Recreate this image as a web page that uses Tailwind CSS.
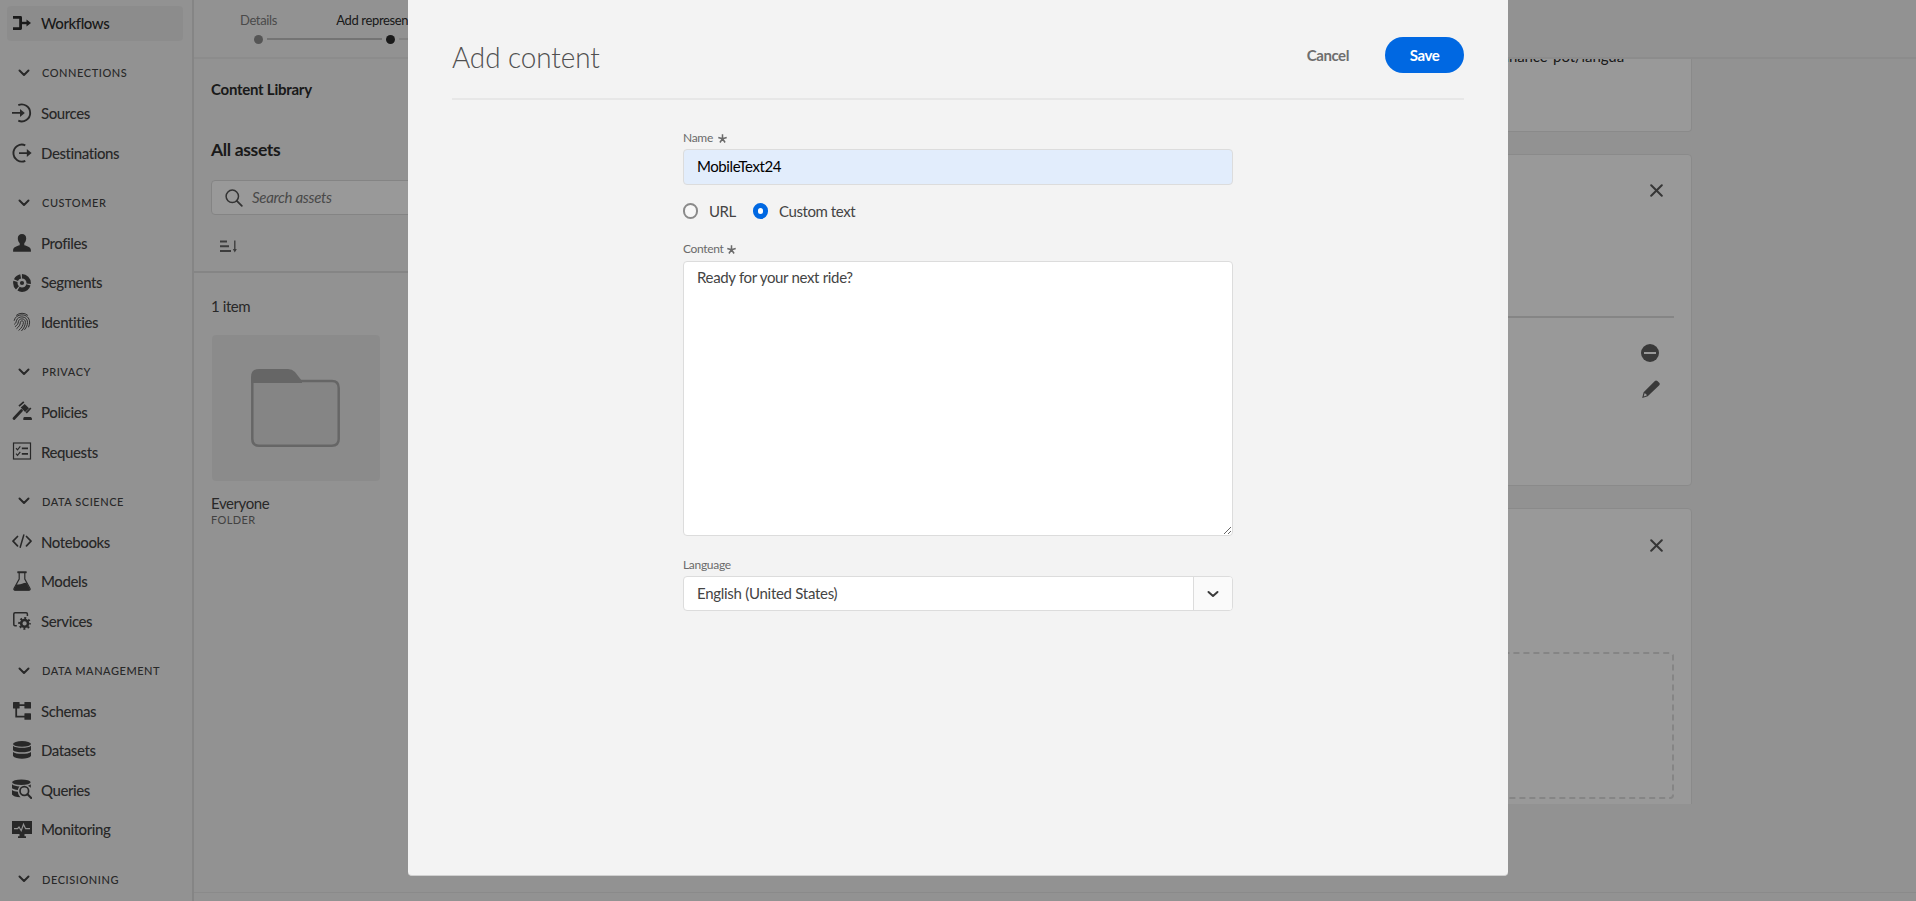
<!DOCTYPE html>
<html lang="en">
<head>
<meta charset="utf-8">
<title>Add content</title>
<script src="https://cdn.jsdelivr.net/npm/@tailwindcss/browser@4"></script>
</head>
<body class="h-[901px] overflow-hidden bg-[#f4f4f4] font-['Lato',sans-serif] text-[15px] tracking-[-0.42px] text-[#444]">
<div class="relative flex h-[901px] overflow-hidden">

  <!-- Side navigation -->
  <aside class="w-[194px] flex-none overflow-hidden border-r-2 border-[#dedede] font-medium">
    <div class="ml-[7px] mt-[6px] mb-[2px] flex h-[35px] w-[176px] items-center gap-[9px] rounded bg-[#eaeaea] pl-[5px] text-[#2c2c2c]">
      <svg class="-mt-0.5 size-5" viewBox="0 0 20 20" fill="none" stroke="currentColor"><path d="M1 4.400H8.600V15.600H1" stroke-width="2.800" stroke-linejoin="round"/><path d="M8 10H16" stroke-width="2.400"/><path d="M14.500 6.400L19 10L14.500 13.600Z" fill="currentColor" stroke="none"/></svg>
      <span>Workflows</span>
    </div>

    <div class="flex h-[50.7px] items-center gap-[12px] pl-[18px] pt-[10px] text-[11px] tracking-[0.55px]">
      <svg class="-mt-px h-3 w-3" viewBox="0 0 12 12" fill="none" stroke="currentColor" stroke-width="2" stroke-linecap="round" stroke-linejoin="round"><path d="M1.500 3.500L6 8L10.500 3.500"/></svg>
      <span>CONNECTIONS</span>
    </div>
    <div class="flex h-[39.5px] items-center gap-[9px] pl-3">
      <svg class="size-5" viewBox="0 0 20 20" fill="none" stroke="currentColor" stroke-width="1.9"><path d="M6.300 2.100A8.500 8.500 0 1 1 6.300 17.700M0 9.900H9"/><path d="M8 5.900L12.800 9.900L8 13.900Z" fill="currentColor" stroke="none"/></svg>
      <span>Sources</span>
    </div>
    <div class="flex h-[39.5px] items-center gap-[9px] pl-3">
      <svg class="size-5" viewBox="0 0 20 20" fill="none" stroke="currentColor" stroke-width="1.9"><path d="M13.300 2.300A8.500 8.500 0 1 0 13.300 17.900M7 10.100H16"/><path d="M14.800 6.100L19.600 10.100L14.800 14.100Z" fill="currentColor" stroke="none"/></svg>
      <span>Destinations</span>
    </div>

    <div class="flex h-[50.7px] items-center gap-[12px] pl-[18px] pt-[10px] text-[11px] tracking-[0.55px]">
      <svg class="-mt-px h-3 w-3" viewBox="0 0 12 12" fill="none" stroke="currentColor" stroke-width="2" stroke-linecap="round" stroke-linejoin="round"><path d="M1.500 3.500L6 8L10.500 3.500"/></svg>
      <span>CUSTOMER</span>
    </div>
    <div class="flex h-[39.5px] items-center gap-[9px] pl-3">
      <svg class="size-5" viewBox="0 0 20 20" fill="currentColor"><path d="M10 1C12.600 1 14.200 2.700 14.200 5.300C14.200 7.500 13.400 9.200 12.300 10.300V12.200C15.500 13 18.900 14.300 18.900 17.200V18.700H1.100V17.200C1.100 14.300 4.500 13 7.700 12.200V10.300C6.600 9.200 5.800 7.500 5.800 5.300C5.800 2.700 7.400 1 10 1Z"/></svg>
      <span>Profiles</span>
    </div>
    <div class="flex h-[39.5px] items-center gap-[9px] pl-3">
      <svg class="size-5" viewBox="0 0 20 20" fill="none" stroke="currentColor"><circle cx="10" cy="10" r="6.700" stroke-width="4.400" stroke-dasharray="12.100 1.300 7.200 1.300 6.100 1.300 11.500 1.300" stroke-dashoffset="-2"/><circle cx="10" cy="10" r="2.100" fill="currentColor" stroke="none"/></svg>
      <span>Segments</span>
    </div>
    <div class="flex h-[39.5px] items-center gap-[9px] pl-3">
      <svg class="size-5" viewBox="0 0 20 20" fill="none" stroke="currentColor" stroke-width=".95" stroke-linecap="round"><path d="M4.500 3.200A8.500 8.500 0 0 1 15.600 3.200M2.200 8.400C3 4.900 6 2.900 9.800 2.900C14.300 2.900 17.500 5.800 17.600 10.100C17.600 12 17.200 13.500 16.600 14.900M2.500 12.200C4.600 10.800 4 9.500 4.600 8.200C5.500 6 7.300 4.900 9.900 4.900C13.300 4.900 15.500 7 15.500 10.300C15.500 13.200 14.300 15.400 12.700 17.500M3.300 14.500C5.500 13.100 6.200 11.500 6.400 9.700C6.600 7.900 8 6.900 9.900 6.900C12 6.900 13.500 8.200 13.400 10.400C13.200 13.600 11.800 16.400 9.700 18.700M4.800 16.500C7.100 14.700 8.200 12.700 8.400 10.300C8.500 9.300 9.100 8.900 9.900 8.900C10.900 8.900 11.500 9.500 11.400 10.500C11.200 13.400 9.500 16.200 6.900 18.200"/></svg>
      <span>Identities</span>
    </div>

    <div class="flex h-[50.7px] items-center gap-[12px] pl-[18px] pt-[10px] text-[11px] tracking-[0.55px]">
      <svg class="-mt-px h-3 w-3" viewBox="0 0 12 12" fill="none" stroke="currentColor" stroke-width="2" stroke-linecap="round" stroke-linejoin="round"><path d="M1.500 3.500L6 8L10.500 3.500"/></svg>
      <span>PRIVACY</span>
    </div>
    <div class="flex h-[39.5px] items-center gap-[9px] pl-3">
      <svg class="-mt-0.5 size-5" viewBox="0 0 20 20" fill="currentColor"><path d="M9.500 9.500L2 17.500" stroke="currentColor" stroke-width="2.800" stroke-linecap="round"/><path d="M7 5.200L11.800 .900M14.200 11.900L18.800 7" stroke="currentColor" stroke-width="1.800"/><path d="M8.700 6.500L12.700 2.900L17 7.300L13.100 10.900Z"/><path d="M11.300 19V17.500C11.300 16.300 12.300 15.900 13 15.900H18C19 15.900 19.900 16.500 19.900 17.600V19Z"/></svg>
      <span>Policies</span>
    </div>
    <div class="flex h-[39.5px] items-center gap-[9px] pl-3">
      <svg class="-mt-px size-5" viewBox="0 0 20 20" fill="none" stroke="currentColor"><rect x="1.500" y="2" width="17" height="16" stroke-width="1.200"/><path d="M9.800 7.300H16M9.800 12.800H16" stroke-width="1.700"/><path d="M4 7.200L5.500 8.800L8.300 5.400M4 12.700L5.500 14.300L8.300 10.900" stroke-width="1.200"/></svg>
      <span>Requests</span>
    </div>

    <div class="flex h-[50.7px] items-center gap-[12px] pl-[18px] pt-[10px] text-[11px] tracking-[0.55px]">
      <svg class="-mt-px h-3 w-3" viewBox="0 0 12 12" fill="none" stroke="currentColor" stroke-width="2" stroke-linecap="round" stroke-linejoin="round"><path d="M1.500 3.500L6 8L10.500 3.500"/></svg>
      <span>DATA SCIENCE</span>
    </div>
    <div class="flex h-[39.5px] items-center gap-[9px] pl-3">
      <svg class="-mt-0.5 size-5" viewBox="0 0 20 20" fill="none" stroke="currentColor" stroke-width="1.700" stroke-linecap="round" stroke-linejoin="round"><path d="M5.500 5.500L1 10.200L5.500 14.900M14.500 5.500L19 10.200L14.500 14.900"/><path d="M11.800 4L8.200 16.200" stroke-width="1.500"/></svg>
      <span>Notebooks</span>
    </div>
    <div class="flex h-[39.5px] items-center gap-[9px] pl-3">
      <svg class="-mt-0.5 size-5" viewBox="0 0 20 20" fill="currentColor"><rect x="5.300" y=".300" width="9.400" height="1.900" rx=".4"/><path d="M7.200 2V8L2 17.500C1.600 18.500 2 19.200 3 19.200H17C18 19.200 18.400 18.500 18 17.500L12.800 8V2" fill="none" stroke="currentColor" stroke-width="1.200"/><path d="M4.600 13.200C8 14.300 10.800 11.500 14.400 11.700L18 18.200L17.300 19.500H2.600L1.900 18.200Z"/></svg>
      <span>Models</span>
    </div>
    <div class="flex h-[39.5px] items-center gap-[9px] pl-3">
      <svg class="size-5" viewBox="0 0 20 20" fill="none" stroke="currentColor"><path d="M4.800 14.700H3C2.200 14.700 1.800 14.200 1.800 13.500V2.900C1.800 2.100 2.300 1.700 3 1.700H14.200C15 1.700 15.400 2.100 15.400 2.900V5" stroke-width="1.500"/><circle cx="12.600" cy="12.400" r="3.400" stroke-width="2.600"/><circle cx="12.600" cy="12.400" r="5.400" stroke-width="2" stroke-dasharray="2 2.241" stroke-dashoffset="1"/></svg>
      <span>Services</span>
    </div>

    <div class="flex h-[50.7px] items-center gap-[12px] pl-[18px] pt-[10px] text-[11px] tracking-[0.55px]">
      <svg class="-mt-px h-3 w-3" viewBox="0 0 12 12" fill="none" stroke="currentColor" stroke-width="2" stroke-linecap="round" stroke-linejoin="round"><path d="M1.500 3.500L6 8L10.500 3.500"/></svg>
      <span>DATA MANAGEMENT</span>
    </div>
    <div class="flex h-[39.5px] items-center gap-[9px] pl-3">
      <svg class="size-5" viewBox="0 0 20 20" fill="currentColor"><rect x="1" y="1" width="6.600" height="6.600" rx=".6"/><rect x="12.400" y="1" width="6.600" height="6.600" rx=".6"/><rect x="12.400" y="12.200" width="6.600" height="6.600" rx=".6"/><path d="M7 4.200H13M4.200 7V15.600H13" fill="none" stroke="currentColor" stroke-width="1.800"/></svg>
      <span>Schemas</span>
    </div>
    <div class="flex h-[39.5px] items-center gap-[9px] pl-3">
      <svg class="-mt-0.5 size-5" viewBox="0 0 20 20" fill="currentColor"><ellipse cx="10" cy="3.900" rx="9" ry="2.800"/><path d="M1 5.700C3.500 8.500 16.500 8.500 19 5.700V10.200C16.500 13 3.500 13 1 10.200ZM1 11.900C3.500 14.500 16.500 14.500 19 11.900V16C16.500 19.500 3.500 19.500 1 16Z"/></svg>
      <span>Datasets</span>
    </div>
    <div class="flex h-[39.5px] items-center gap-[9px] pl-3">
      <svg class="-mt-0.5 size-5" viewBox="0 0 20 20" fill="currentColor"><ellipse cx="9.400" cy="3.300" rx="9.300" ry="2.800"/><path d="M0 5.200C1.600 6.600 4.500 7.200 7.600 7.400C6.600 8.300 6 9.700 5.900 11C3 10.700 1 10 0 9.200ZM0 11C1.500 12 3.500 12.500 5.900 12.700C6 14.800 6.900 16.700 8.600 18.200C4.500 18.300 .9 17.200 0 15.500ZM15.700 6.700C17.200 6.300 18.300 5.800 18.800 5.200V9C18.200 8 17 7.100 15.700 6.700Z"/><circle cx="12.300" cy="12" r="4.300" fill="none" stroke="currentColor" stroke-width="1.700"/><path d="M15.500 15.200L19.200 18.900" stroke="currentColor" stroke-width="2.100" stroke-linecap="round"/></svg>
      <span>Queries</span>
    </div>
    <div class="flex h-[39.5px] items-center gap-[9px] pl-3">
      <svg class="-mt-0.5 size-5" viewBox="0 0 20 20" fill="currentColor"><path d="M0 2H20V15H12.500V17.200H14V19H6V17.200H7.500V15H0Z"/><path d="M2 9.700H5.500L7 8L9.200 11.700L11.500 5.400L13.600 9.700H18" fill="none" stroke="#f4f4f4" stroke-width="1.200"/></svg>
      <span>Monitoring</span>
    </div>

    <div class="flex h-[50.7px] items-center gap-[12px] pl-[18px] pt-[10px] text-[11px] tracking-[0.55px]">
      <svg class="-mt-px h-3 w-3" viewBox="0 0 12 12" fill="none" stroke="currentColor" stroke-width="2" stroke-linecap="round" stroke-linejoin="round"><path d="M1.500 3.500L6 8L10.500 3.500"/></svg>
      <span>DECISIONING</span>
    </div>
  </aside>

  <!-- Page behind the dialog -->
  <main class="flex min-w-0 flex-1 flex-col">
    <header class="flex h-[59px] flex-none border-b-2 border-[#eaeaea] pl-[24px] pt-[11px] text-[13px] tracking-[-0.35px]">
      <ol class="flex">
        <li class="flex w-[81px] flex-col items-center">
          <span class="h-[24px] leading-[18px] text-[#7c7c7c]">Details</span>
          <span class="size-[9px] rounded-full bg-[#8e8e8e]"></span>
        </li>
        <li class="-mx-8 mt-[27px] h-0.5 w-[115px] bg-[#c2c2c2]"></li>
        <li class="flex w-[81px] flex-col items-center">
          <span class="h-[24px] whitespace-nowrap leading-[18px] text-[#2c2c2c]">Add representations</span>
          <span class="size-[9px] rounded-full bg-[#2c2c2c]"></span>
        </li>
        <li class="-mx-8 mt-[27px] h-0.5 w-[115px] bg-[#dcdcdc]"></li>
      </ol>
    </header>

    <div class="flex h-[833px] flex-none">
      <section class="w-[400px] flex-none">
        <div class="h-[214px] border-b-2 border-[#dedede] pl-[17px]">
          <h2 class="pt-[19px] text-[15px] leading-[22px] font-bold tracking-[-0.25px] text-[#2c2c2c]">Content Library</h2>
          <h1 class="mt-[38px] text-[17.5px] leading-[24px] font-bold tracking-[-0.35px] text-[#2c2c2c]">All assets</h1>
          <div class="mt-[18px] flex h-[35px] items-center gap-[9px] rounded border border-[#dcdcdc] bg-white pl-[13px] italic tracking-[-0.3px] text-[#7a7a7a]">
            <svg class="size-[18px]" viewBox="0 0 18 18" fill="none" stroke="#555" stroke-width="1.500" stroke-linecap="round"><circle cx="7.300" cy="7.300" r="6.200"/><path d="M11.800 11.800L16.800 16.800" stroke-width="1.800"/></svg>
            <span>Search assets</span>
          </div>
          <svg class="mt-[25px] ml-[9px] h-[13px] w-[18px]" viewBox="0 0 18 13" fill="none" stroke="#666" stroke-width="2"><path d="M0 1.500H7M0 6.300H9M0 11.100H11"/><path d="M14.800 .500V11" stroke-width="1.400"/><path d="M12.800 9H16.800L14.800 12.500Z" fill="#666" stroke="none"/></svg>
        </div>
        <div class="pl-[17px]">
          <p class="mt-[22px] h-[22px] leading-[22px]">1 item</p>
          <div class="mt-[18px] ml-[1px] flex h-[146px] w-[168px] items-center justify-center rounded bg-[#e8e8e8]">
            <svg class="h-[78px] w-[89px] -ml-0.5" viewBox="0 0 89 78"><path d="M1.300 14V70Q1.300 76.700 8 76.700H81Q87.700 76.700 87.700 70V19Q87.700 12 81 12H1.300Z" fill="#dedede" stroke="#ababab" stroke-width="2.500"/><path d="M0 14V8Q0 0 8 0H37Q41 0 44 3L51 12V14Z" fill="#ababab"/></svg>
          </div>
          <p class="mt-[12px] leading-[20px]">Everyone</p>
          <p class="text-[11px] leading-[14px] tracking-[0.4px] text-[#6e6e6e]">FOLDER</p>
        </div>
      </section>

      <section class="flex h-[745px] flex-1 flex-col items-end overflow-hidden pr-[224px]">
        <div class="h-[73px] w-[600px] flex-none rounded-b border border-t-0 border-[#e6e6e6] bg-white">
          <p class="-mt-[13px] pr-[67px] text-right leading-[20px] tracking-[-0.1px] text-[#2c2c2c]">finance-pot/langua</p>
        </div>
        <div class="mt-[22px] h-[332px] w-[600px] flex-none rounded border border-[#e6e6e6] bg-white pr-[17px]">
          <div class="flex h-[163px] justify-end border-b-2 border-[#dedede] pt-[29px] pr-[11px]">
            <svg class="size-[13px]" viewBox="0 0 13 13" fill="none" stroke="#5a5a5a" stroke-width="2" stroke-linecap="round"><path d="M1.200 1.200L11.800 11.800M11.800 1.200L1.200 11.800"/></svg>
          </div>
          <div class="flex flex-col items-end gap-[18px] pt-[26px] pr-[14px]">
            <svg class="mr-[1px] size-[18px]" viewBox="0 0 18 18"><circle cx="9" cy="9" r="9" fill="#606060"/><rect x="3" y="8" width="12" height="2" fill="#fff"/></svg>
            <svg class="size-[18px]" viewBox="0 0 18 18" fill="#606060"><path d="M12.600 1.200Q14 -.3 15.400 1L17.200 2.800Q18.400 4.100 17 5.500L5.700 16.200L.2 18L1.600 12.200ZM2.500 13.200L1.700 16.400L4.800 15.500L4.200 13.900Z" fill-rule="evenodd"/></svg>
          </div>
        </div>
        <div class="mt-[22px] h-[332px] w-[600px] flex-none rounded border border-[#e6e6e6] bg-white pr-[17px]">
          <div class="flex h-[143px] justify-end pt-[30px] pr-[11px]">
            <svg class="size-[13px]" viewBox="0 0 13 13" fill="none" stroke="#5a5a5a" stroke-width="2" stroke-linecap="round"><path d="M1.200 1.200L11.800 11.800M11.800 1.200L1.200 11.800"/></svg>
          </div>
          <div class="ml-[17px] h-[147px] rounded border-2 border-dashed border-[#dedede]"></div>
        </div>
      </section>
    </div>
    <footer class="flex-1 border-t border-[#e6e6e6]"></footer>
  </main>

  <!-- Dialog -->
  <div class="absolute inset-0 flex items-start justify-center bg-black/40">
    <div class="h-[876px] w-[1100px] rounded-b border-b border-[#d0d0d0] bg-[#f3f3f3] px-[44px]">
      <div class="flex h-[100px] items-center border-b-2 border-[#e7e7e7] pt-[12px]">
        <h1 class="flex-1 origin-left scale-x-[0.93] pt-[2px] text-[30px] leading-[36px] font-light tracking-[-0.1px] text-[#505050]">Add content</h1>
        <button class="px-[36px] font-bold text-[#6e6e6e]">Cancel</button>
        <button class="h-[36px] w-[79px] rounded-full bg-[#0068e2] font-bold text-white">Save</button>
      </div>

      <form class="mx-auto w-[550px] pt-[28px]">
        <label class="flex h-[21px] items-center gap-[5px] pb-[1px] text-[12px] tracking-[-0.3px] text-[#6a6a6a]">Name
          <svg class="size-[9px]" viewBox="0 0 9 9" fill="none" stroke="currentColor" stroke-width="1.500"><path d="M4.500 4.800V.3M4.500 4.800L.3 3.500M4.500 4.800L8.700 3.500M4.500 4.800L1.900 8.500M4.500 4.800L7.100 8.500"/></svg>
        </label>
        <div class="flex h-[36px] items-center rounded border border-[#dcdcdc] bg-[#e2edfc] pb-[2px] pl-[13px] text-black">MobileText24</div>

        <div class="flex h-[52px] items-center">
          <span class="h-[16px] w-[15px] rounded-full border-2 border-[#8a8a8a] bg-[#f7f7f7]"></span>
          <span class="ml-[11px] w-[44px]">URL</span>
          <span class="h-[16px] w-[15px] rounded-full border-5 border-[#0068e2] bg-white"></span>
          <span class="ml-[11px]">Custom text</span>
        </div>

        <label class="flex h-[24px] items-center gap-[4px] text-[12px] tracking-[-0.35px] text-[#6a6a6a]">Content
          <svg class="size-[9px]" viewBox="0 0 9 9" fill="none" stroke="currentColor" stroke-width="1.500"><path d="M4.500 4.800V.3M4.500 4.800L.3 3.500M4.500 4.800L8.700 3.500M4.500 4.800L1.900 8.500M4.500 4.800L7.100 8.500"/></svg>
        </label>
        <textarea class="block h-[275px] w-full resize-y rounded border border-[#dcdcdc] bg-white px-[13px] py-[5px] leading-[20px] tracking-[-0.33px]">Ready for your next ride?</textarea>

        <label class="flex h-[40px] items-end pb-[3px] text-[12px] leading-[16px] tracking-[-0.3px] text-[#6a6a6a]">Language</label>
        <div class="flex h-[35px] overflow-hidden rounded border border-[#dcdcdc] bg-white">
          <span class="flex flex-1 items-center pl-[13px] tracking-[-0.28px]">English (United States)</span>
          <span class="flex w-[39px] items-center justify-center border-l border-[#dcdcdc] bg-[#fafafa]">
            <svg class="h-3 w-3" viewBox="0 0 12 12" fill="none" stroke="#3c3c3c" stroke-width="2" stroke-linecap="round" stroke-linejoin="round"><path d="M1.500 4L6 8L10.500 4"/></svg>
          </span>
        </div>
      </form>
    </div>
  </div>
</div>
</body>
</html>
